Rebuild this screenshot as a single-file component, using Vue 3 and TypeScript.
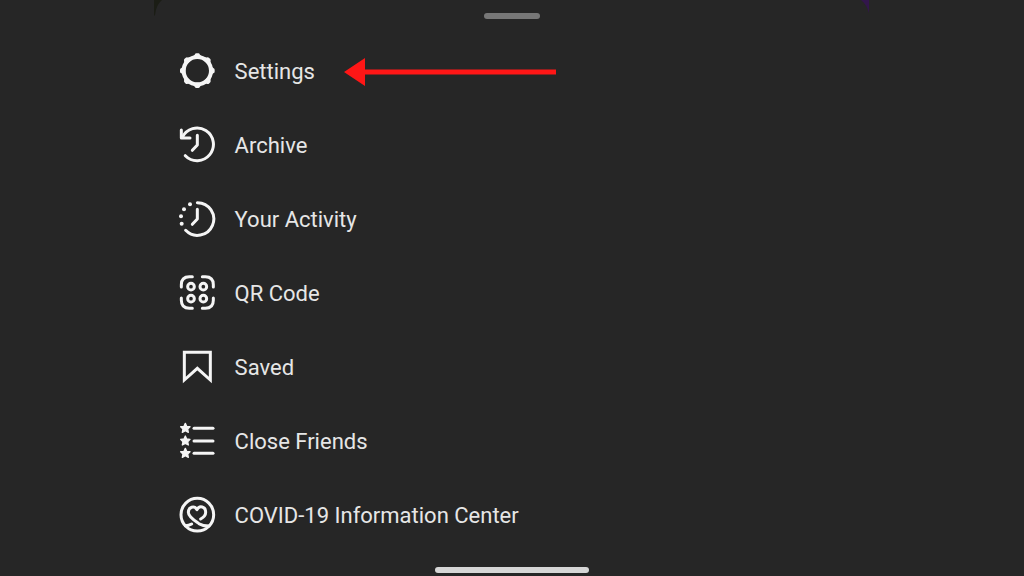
<script setup lang="ts">
type IconName = 'settings' | 'archive' | 'activity' | 'qr' | 'saved' | 'friends' | 'covid'

interface MenuItem {
  icon: IconName
  label: string
  highlighted?: boolean
}

const items: MenuItem[] = [
  { icon: 'settings', label: 'Settings', highlighted: true },
  { icon: 'archive', label: 'Archive' },
  { icon: 'activity', label: 'Your Activity' },
  { icon: 'qr', label: 'QR Code' },
  { icon: 'saved', label: 'Saved' },
  { icon: 'friends', label: 'Close Friends' },
  { icon: 'covid', label: 'COVID-19 Information Center' },
]

const teeth: number[] = [0, 45, 90, 135, 180, 225, 270, 315]
const starRows: number[] = [35, 73, 110]
const qrDots: [number, number][] = [[63, 55], [100, 55], [63, 91], [100, 91]]
</script>

<template>
  <main class="screen">
    <section class="sheet">
      <svg class="corner corner-left" viewBox="0 0 12 16" aria-hidden="true">
        <path d="M0 0H8Q2 5 1 15L0 16Z" fill="#1b1d15" />
      </svg>
      <svg class="corner corner-right" viewBox="0 0 12 16" aria-hidden="true">
        <path d="M3 0H11V13Q9 5 3 0Z" fill="#32164b" />
      </svg>
      <div class="handle"></div>
      <nav class="menu">
        <div v-for="item in items" :key="item.icon" class="row">
          <button type="button" class="entry">
            <svg class="icon" viewBox="24 17 117 120" aria-hidden="true">
              <g v-if="item.icon === 'settings'">
                <circle cx="82" cy="73" r="41" stroke-width="12" />
                <path
                  v-for="angle in teeth"
                  :key="angle"
                  class="solid"
                  d="M65 32Q72 29 74 25Q76 21 79 21H85Q88 21 90 25Q92 29 99 32V37H65Z"
                  :transform="`rotate(${angle} 82 73)`"
                />
              </g>
              <g v-else-if="item.icon === 'archive'">
                <path d="M34 29V53H60" />
                <path d="M37 51A49 49 0 1 1 46 106" />
                <path d="M82 45V74L67 90" />
              </g>
              <g v-else-if="item.icon === 'activity'">
                <path d="M82 25A49 49 0 1 1 47 108" />
                <path d="M82 45V74L67 90" />
                <circle class="solid" cx="60" cy="30" r="6" />
                <circle class="solid" cx="42" cy="45" r="6" />
                <circle class="solid" cx="33" cy="66" r="6" />
                <circle class="solid" cx="35" cy="88" r="6" />
              </g>
              <g v-else-if="item.icon === 'qr'">
                <path d="M34 56V49Q34 25 58 25H67" />
                <path d="M97 25H106Q130 25 130 49V56" />
                <path d="M34 89V96Q34 120 58 120H67" />
                <path d="M97 120H106Q130 120 130 96V89" />
                <circle v-for="([x, y], i) in qrDots" :key="i" :cx="x" :cy="y" r="10" />
              </g>
              <g v-else-if="item.icon === 'saved'" class="mitred">
                <path d="M43 30H121V113L82 78L43 113Z" />
              </g>
              <g v-else-if="item.icon === 'friends'">
                <g v-for="y in starRows" :key="y" :transform="`translate(46 ${y})`">
                  <path
                    class="star"
                    d="M0 -14L4 -5L14 -4L7 3L9 13L0 8L-9 13L-7 3L-14 -4L-4 -5Z"
                  />
                  <path d="M26 1H83" />
                </g>
              </g>
              <g v-else>
                <circle cx="82" cy="73" r="49" />
                <path d="M46 106Q56 106 65 101" />
                <path d="M92 86Q107 78 107 66C107 48 88 44 81 58C73 44 55 50 55 66C55 80 74 91 87 100Q98 107 117 107" />
              </g>
            </svg>
            <span>{{ item.label }}</span>
          </button>
          <svg v-if="item.highlighted" class="arrow" viewBox="0 0 212 28" aria-hidden="true">
            <path d="M0 14L21 0V11.6H212V16.4H21V28Z" />
          </svg>
        </div>
      </nav>
    </section>
    <div class="home-bar"></div>
  </main>
</template>

<style>
body {
  margin: 0;
  background: #262626;
}
</style>

<style scoped>
.screen {
  display: flex;
  flex-direction: column;
  align-items: center;
  min-height: 100vh;
  box-sizing: border-box;
  padding-bottom: 3px;
  background: #262626;
  color: #e6e6e6;
  font-family: Roboto, "Liberation Sans", sans-serif;
}

.sheet {
  position: relative;
  width: 70%;
}

.corner {
  position: absolute;
  top: 0;
  width: 12px;
  height: 16px;
}

.corner-left {
  left: 0;
}

.corner-right {
  right: 0;
}

.handle {
  width: 56px;
  height: 6px;
  margin: 13px auto 16px;
  border-radius: 3px;
  background: #777777;
}

.menu {
  padding-left: 24px;
}

.row {
  display: flex;
  align-items: center;
  gap: 29px;
  height: 74px;
}

.entry {
  display: flex;
  align-items: center;
  gap: 18px;
  padding: 0;
  border: 0;
  background: none;
  color: inherit;
  font: inherit;
  font-size: 22px;
  line-height: 28px;
  white-space: nowrap;
  cursor: pointer;
}

.icon {
  flex: none;
  width: 39px;
  height: 40px;
  fill: none;
  stroke: #f5f5f5;
  stroke-width: 9;
  stroke-linecap: round;
  stroke-linejoin: round;
}

.icon .solid {
  fill: #f5f5f5;
  stroke: none;
}

.icon .mitred {
  stroke-linejoin: miter;
}

.icon .star {
  fill: #f5f5f5;
  stroke-width: 4;
}

.arrow {
  flex: none;
  width: 212px;
  height: 28px;
  fill: #ff1616;
}

.home-bar {
  width: 154px;
  height: 6px;
  margin-top: auto;
  border-radius: 3px;
  background: #d6d6d6;
}
</style>
